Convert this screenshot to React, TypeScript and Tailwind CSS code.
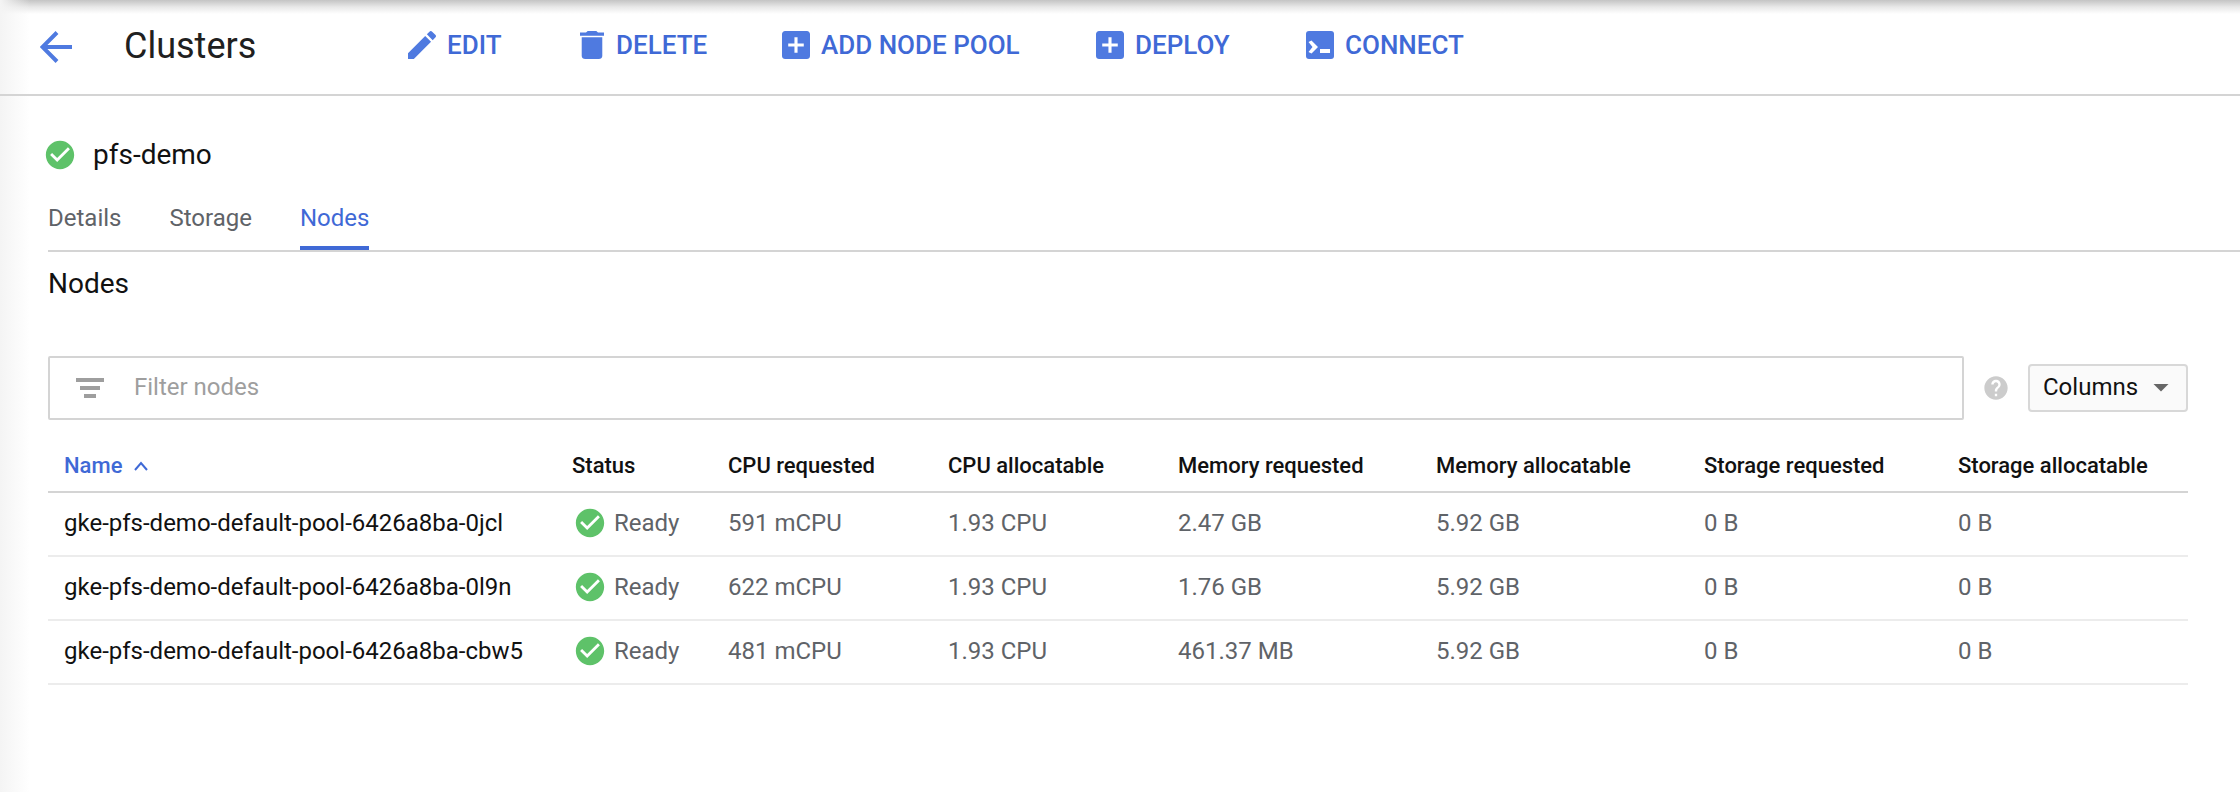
import { MdCheckCircle, MdHelp, MdArrowDropDown } from "react-icons/md";

const blue = "text-[#3f69d6]";

const EditIcon = () => (
    <svg viewBox="3 3 18 18" className="w-[28px] h-[28px]" fill="currentColor">
        <path d="M3 17.25V21h3.75L17.81 9.94l-3.75-3.75L3 17.25zM20.71 7.04c.39-.39.39-1.02 0-1.41l-2.34-2.34c-.39-.39-1.02-.39-1.41 0l-1.83 1.83 3.75 3.75 1.83-1.83z" />
    </svg>
);

const DeleteIcon = () => (
    <svg viewBox="5 3 14 18" preserveAspectRatio="none" className="w-[24px] h-[28px]" fill="currentColor">
        <path d="M6 19c0 1.1.9 2 2 2h8c1.1 0 2-.9 2-2V7H6v12zM19 4h-3.5l-1-1h-5l-1 1H5v2h14V4z" />
    </svg>
);

const AddIcon = () => (
    <svg viewBox="3 3 18 18" className="w-[28px] h-[28px]" fill="currentColor">
        <path d="M19 3H5c-1.11 0-2 .9-2 2v14c0 1.1.89 2 2 2h14c1.1 0 2-.9 2-2V5c0-1.1-.9-2-2-2zm-2 10h-4v4h-2v-4H7v-2h4V7h2v4h4v2z" />
    </svg>
);

const ConnectIcon = () => (
    <svg viewBox="0 0 28 28" className="w-[28px] h-[28px]">
        <rect x="0" y="0" width="28" height="28" rx="3" fill="currentColor" />
        <path d="M2.5 11l3-1.5 6.5 6.5-6.5 6.5-3-1.5 4-5z" fill="#fff" />
        <rect x="14" y="18" width="10" height="4" fill="#fff" />
    </svg>
);

const actions = [
    { label: "EDIT", Icon: EditIcon, cls: "w-[172px]", gap: "ml-[11px]" },
    { label: "DELETE", Icon: DeleteIcon, cls: "w-[202px]", gap: "ml-[12px]" },
    { label: "ADD NODE POOL", Icon: AddIcon, cls: "w-[314px]", gap: "ml-[11px]" },
    { label: "DEPLOY", Icon: AddIcon, cls: "w-[210px]", gap: "ml-[11px]" },
    { label: "CONNECT", Icon: ConnectIcon, cls: "", gap: "ml-[11px]" },
];

const columns = [
    "Status",
    "CPU requested",
    "CPU allocatable",
    "Memory requested",
    "Memory allocatable",
    "Storage requested",
    "Storage allocatable",
];

const rows = [
    ["gke-pfs-demo-default-pool-6426a8ba-0jcl", "591 mCPU", "1.93 CPU", "2.47 GB", "5.92 GB", "0 B", "0 B"],
    ["gke-pfs-demo-default-pool-6426a8ba-0l9n", "622 mCPU", "1.93 CPU", "1.76 GB", "5.92 GB", "0 B", "0 B"],
    ["gke-pfs-demo-default-pool-6426a8ba-cbw5", "481 mCPU", "1.93 CPU", "461.37 MB", "5.92 GB", "0 B", "0 B"],
];

const gridCols = "grid grid-cols-[508px_156px_220px_230px_258px_268px_254px_1fr] items-center pl-4";

const App: React.FC = () => {
    return (
        <div className="relative w-[2240px] h-[792px] overflow-hidden bg-white font-['Roboto',sans-serif] text-[#212121]">
            {/* window shadows */}
            <div className="absolute inset-x-0 top-0 h-[14px] bg-gradient-to-b from-[#c4c4c4] via-[#e8e8e8] to-[#ffffff]"></div>
            <div className="absolute inset-y-0 left-0 w-[30px] bg-gradient-to-r from-[#f4f4f4] to-white/0"></div>

            <div className="relative h-[96px] border-b-2 border-[#d4d4d4] flex items-center">
                <svg viewBox="0 0 32 32" className="w-[32px] h-[32px] ml-[40px] mt-[-1px] shrink-0 text-[#4f7ae0]" fill="none" stroke="currentColor" strokeWidth="4">
                    <path d="M32 16H3M17 1.500L2.500 16 17 30.500" />
                </svg>
                <span className="text-[36px] leading-none ml-[52px] w-[284px] mt-[-2px] text-[#202020]">Clusters</span>
                <div className="flex items-center mt-[-4px]">
                    {actions.map(({ label, Icon, cls, gap }) => (
                        <div key={label} className={`flex items-center shrink-0 ${cls}`}>
                            <span className="text-[#4f7ae0] shrink-0 flex"><Icon /></span>
                            <span className={`${blue} ${gap} text-[26px] font-medium leading-none`}>{label}</span>
                        </div>
                    ))}
                </div>
            </div>

            <div className="relative pl-[43px] pt-[42px] flex items-center">
                <MdCheckCircle className="text-[#5ec269] w-[34px] h-[34px]" />
                <span className="ml-[16px] text-[28px] leading-[34px] text-[#111]">pfs-demo</span>
            </div>

            <div className="relative ml-[48px] mt-[30px] h-[48px] border-b-2 border-[#d4d4d4] box-content flex gap-[48px] text-[24px] leading-[32px] text-[#5f6368]">
                <span>Details</span>
                <span>Storage</span>
                <span className="h-[48px] border-b-4 border-[#3f69d6] text-[#3f69d6]">Nodes</span>
            </div>

            <div className="relative ml-[48px] mt-[14px] text-[28px] leading-[36px] text-[#111]">Nodes</div>

            <div className="relative ml-[48px] mr-[52px] mt-[54px] flex items-center">
                <div className="w-[1916px] h-[64px] border-2 border-[#d4d4d4] rounded-[2px] flex items-center shrink-0">
                    <svg viewBox="0 0 28 20" className="w-[28px] h-[20px] ml-[26px] text-[#9e9e9e]" fill="currentColor">
                        <rect x="0" y="0" width="28" height="4" />
                        <rect x="4" y="8" width="20" height="4" />
                        <rect x="8" y="16" width="12" height="4" />
                    </svg>
                    <span className="ml-[30px] text-[24px] leading-[32px] mt-[-2px] text-[#9e9e9e]">Filter nodes</span>
                </div>
                <MdHelp className="text-[#cccccc] w-[28px] h-[28px] ml-[18px] shrink-0" />
                <div className="ml-[18px] w-[160px] h-[48px] pb-[2px] border-2 border-[#d8d8d8] rounded-[4px] bg-[#fafafa] flex items-center pl-[13px] text-[24px] text-[#111] shrink-0">
                    Columns
                    <MdArrowDropDown className="text-[#666] w-[36px] h-[36px] ml-[5px]" />
                </div>
            </div>

            <div className="relative ml-[48px] mr-[52px] mt-[20px]">
                <div className={`${gridCols} h-[53px] border-b-2 border-[#d4d4d4] text-[22px] font-medium text-[#111]`}>
                    <div className="flex items-center text-[#3f69d6]">
                        Name
                        <svg viewBox="0 0 14 10" className="ml-[12px] w-[14px] h-[10px]" fill="none" stroke="currentColor" strokeWidth="2">
                            <path d="M1 9l6-7 6 7" />
                        </svg>
                    </div>
                    {columns.map((c) => (
                        <div key={c} className="whitespace-nowrap">{c}</div>
                    ))}
                </div>
                {rows.map((r) => (
                    <div key={r[0]} className={`${gridCols} h-[64px] pb-[2px] border-b-2 border-[#ececec] text-[24px] text-[#5f6368]`}>
                        <div className="text-[#111] whitespace-nowrap">{r[0]}</div>
                        <div className="flex items-center">
                            <MdCheckCircle className="text-[#5ec269] w-[34px] h-[34px] ml-[1px]" />
                            <span className="ml-[7px]">Ready</span>
                        </div>
                        {r.slice(1).map((v, i) => (
                            <div key={i} className="whitespace-nowrap">{v}</div>
                        ))}
                    </div>
                ))}
            </div>
        </div>
    );
};

export default App;
